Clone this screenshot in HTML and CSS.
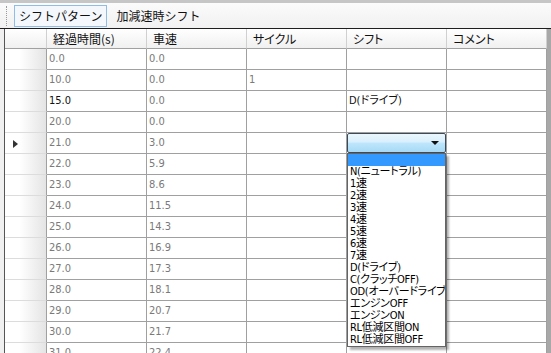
FILE: index.html
```html
<!DOCTYPE html>
<html lang="ja">
<head>
  <meta charset="UTF-8" />
  <title>シフトパターン</title>
  <link rel="stylesheet" href="styles.css">
</head>
<body>

  <div class="toolbar">
    <span class="grip"></span>
    <span class="tab active">シフトパターン</span>
    <span class="tab">加減速時シフト</span>
  </div>

  <div class="grid">
    <div class="table">
      <div class="row head">
        <div class="rowhead"></div>
        <div class="cell">経過時間(s)</div>
        <div class="cell">車速</div>
        <div class="cell">サイクル</div>
        <div class="cell">シフト</div>
        <div class="cell">コメント</div>
      </div>

      <div class="row"><div class="rowhead"></div><div class="cell">0.0</div><div class="cell">0.0</div><div class="cell"></div><div class="cell"></div><div class="cell"></div></div>
      <div class="row"><div class="rowhead"></div><div class="cell">10.0</div><div class="cell">0.0</div><div class="cell">1</div><div class="cell"></div><div class="cell"></div></div>
      <div class="row"><div class="rowhead"></div><div class="cell dark">15.0</div><div class="cell">0.0</div><div class="cell"></div><div class="cell dark jp">D(ドライブ)</div><div class="cell"></div></div>
      <div class="row"><div class="rowhead"></div><div class="cell">20.0</div><div class="cell">0.0</div><div class="cell"></div><div class="cell"></div><div class="cell"></div></div>

      <!-- current row with the open shift combo -->
      <div class="row">
        <div class="rowhead">
          <svg class="current" width="5" height="8" viewBox="0 0 5 8"><polygon points="0,0 5,4 0,8" fill="#333"/></svg>
        </div>
        <div class="cell">21.0</div>
        <div class="cell">3.0</div>
        <div class="cell"></div>
        <div class="cell editing">
          <div class="combo"><span class="arrow"></span></div>
          <ul class="dropdown">
            <li class="selected">&nbsp;</li>
            <li>N(ニュートラル)</li>
            <li>1速</li>
            <li>2速</li>
            <li>3速</li>
            <li>4速</li>
            <li>5速</li>
            <li>6速</li>
            <li>7速</li>
            <li>D(ドライブ)</li>
            <li>C(クラッチOFF)</li>
            <li>OD(オーバードライブ)</li>
            <li>エンジンOFF</li>
            <li>エンジンON</li>
            <li>RL低減区間ON</li>
            <li>RL低減区間OFF</li>
          </ul>
        </div>
        <div class="cell"></div>
      </div>

      <div class="row"><div class="rowhead"></div><div class="cell">22.0</div><div class="cell">5.9</div><div class="cell"></div><div class="cell"></div><div class="cell"></div></div>
      <div class="row"><div class="rowhead"></div><div class="cell">23.0</div><div class="cell">8.6</div><div class="cell"></div><div class="cell"></div><div class="cell"></div></div>
      <div class="row"><div class="rowhead"></div><div class="cell">24.0</div><div class="cell">11.5</div><div class="cell"></div><div class="cell"></div><div class="cell"></div></div>
      <div class="row"><div class="rowhead"></div><div class="cell">25.0</div><div class="cell">14.3</div><div class="cell"></div><div class="cell"></div><div class="cell"></div></div>
      <div class="row"><div class="rowhead"></div><div class="cell">26.0</div><div class="cell">16.9</div><div class="cell"></div><div class="cell"></div><div class="cell"></div></div>
      <div class="row"><div class="rowhead"></div><div class="cell">27.0</div><div class="cell">17.3</div><div class="cell"></div><div class="cell"></div><div class="cell"></div></div>
      <div class="row"><div class="rowhead"></div><div class="cell">28.0</div><div class="cell">18.1</div><div class="cell"></div><div class="cell"></div><div class="cell"></div></div>
      <div class="row"><div class="rowhead"></div><div class="cell">29.0</div><div class="cell">20.7</div><div class="cell"></div><div class="cell"></div><div class="cell"></div></div>
      <div class="row"><div class="rowhead"></div><div class="cell">30.0</div><div class="cell">21.7</div><div class="cell"></div><div class="cell"></div><div class="cell"></div></div>
      <div class="row"><div class="rowhead"></div><div class="cell">31.0</div><div class="cell">22.4</div><div class="cell"></div><div class="cell"></div><div class="cell"></div></div>
    </div>
  </div>

</body>
</html>
```

FILE: styles.css
```css
body {
  margin: 0;
  width: 551px;
  height: 353px;
  overflow: hidden;
  background: #f0f0f0;
  font-family: "DejaVu Sans Condensed", "Noto Sans CJK JP", sans-serif;
  font-size: 11px;
  color: #7a7a7a;
}

/* toolbar */
.toolbar {
  display: flex;
  align-items: center;
  height: 25px;
  padding-left: 6px;
  border-top: 3px solid #c6c6c6;
  border-bottom: 1px solid #1e1e1e;
  background: linear-gradient(#fbfbfb, #f1f1f1);
}
.grip {
  width: 2px;
  height: 20px;
  border-left: 1px dotted #9a9a9a;
}
.tab {
  display: flex;
  align-items: center;
  height: 20px;
  margin-left: 4px;
  padding: 0 4px;
  border: 1px solid transparent;
  font-family: "Noto Sans CJK JP", sans-serif;
  font-size: 12px;
  color: #111;
}
.tab.active {
  margin-left: 5px;
  border-color: #8fbde6;
  background: #f4f8fc;
}

/* data grid */
.grid {
  display: flex;
  margin-left: 4px;
  border-left: 1px solid #555;
  background: #a8a8a8;
  height: 324px;
  overflow: hidden;
}
.table {
  background: #fff;
  align-self: flex-start;
}
.row {
  display: flex;
  height: 21px;
}
.row.head {
  height: 20px;
}
.rowhead {
  position: relative;
  width: 42px;
  box-sizing: border-box;
  border-right: 1px solid #a0a0a0;
  border-bottom: 1px solid #dcdcdc;
  background: linear-gradient(to right, #fff 35%, #e4e4e4);
}
.current {
  position: absolute;
  left: 8px;
  top: 7px;
}
.cell {
  position: relative;
  width: 100px;
  box-sizing: border-box;
  padding-left: 2px;
  border-right: 1px solid #a0a0a0;
  border-bottom: 1px solid #a0a0a0;
  line-height: 20px;
  white-space: nowrap;
}
.head .rowhead,
.head .cell {
  background: linear-gradient(#ffffff, #f0f0f0);
  border-right-color: #d0d0d0;
  border-bottom-color: #a0a0a0;
}
.head .cell {
  padding-left: 6px;
  line-height: 19px;
  font-family: "Noto Sans CJK JP", sans-serif;
  font-size: 12px;
  font-feature-settings: "palt" 1;
  color: #111;
}
.dark {
  color: #111;
}
.jp {
  font-size: 11px;
  font-feature-settings: "palt" 1;
}

/* open combo box in the shift cell */
.cell.editing {
  padding: 0;
}
.combo {
  position: relative;
  height: 20px;
  box-sizing: border-box;
  border: 1px solid #3e4a56;
  border-radius: 2px;
  background: linear-gradient(#eaf6fd 0%, #d9f0fc 45%, #bee6fd 50%, #a7d9f5 100%);
}
.arrow {
  position: absolute;
  right: 6px;
  top: 7px;
  border-left: 4px solid transparent;
  border-right: 4px solid transparent;
  border-top: 4px solid #111;
}
.dropdown {
  position: absolute;
  z-index: 2;
  top: 20px;
  left: 0;
  width: 99px;
  margin: 0;
  padding: 0;
  list-style: none;
  box-sizing: border-box;
  border: 1px solid #646464;
  background: #fff;
  box-shadow: 3px 3px 2px rgba(0, 0, 0, 0.3);
  overflow: hidden;
}
.dropdown li {
  height: 12px;
  padding-left: 2px;
  line-height: 12px;
  font-size: 11px;
  font-feature-settings: "palt" 1;
  letter-spacing: -0.3px;
  color: #000;
  white-space: nowrap;
}
.dropdown li.selected {
  background: #3399ff;
}
```
